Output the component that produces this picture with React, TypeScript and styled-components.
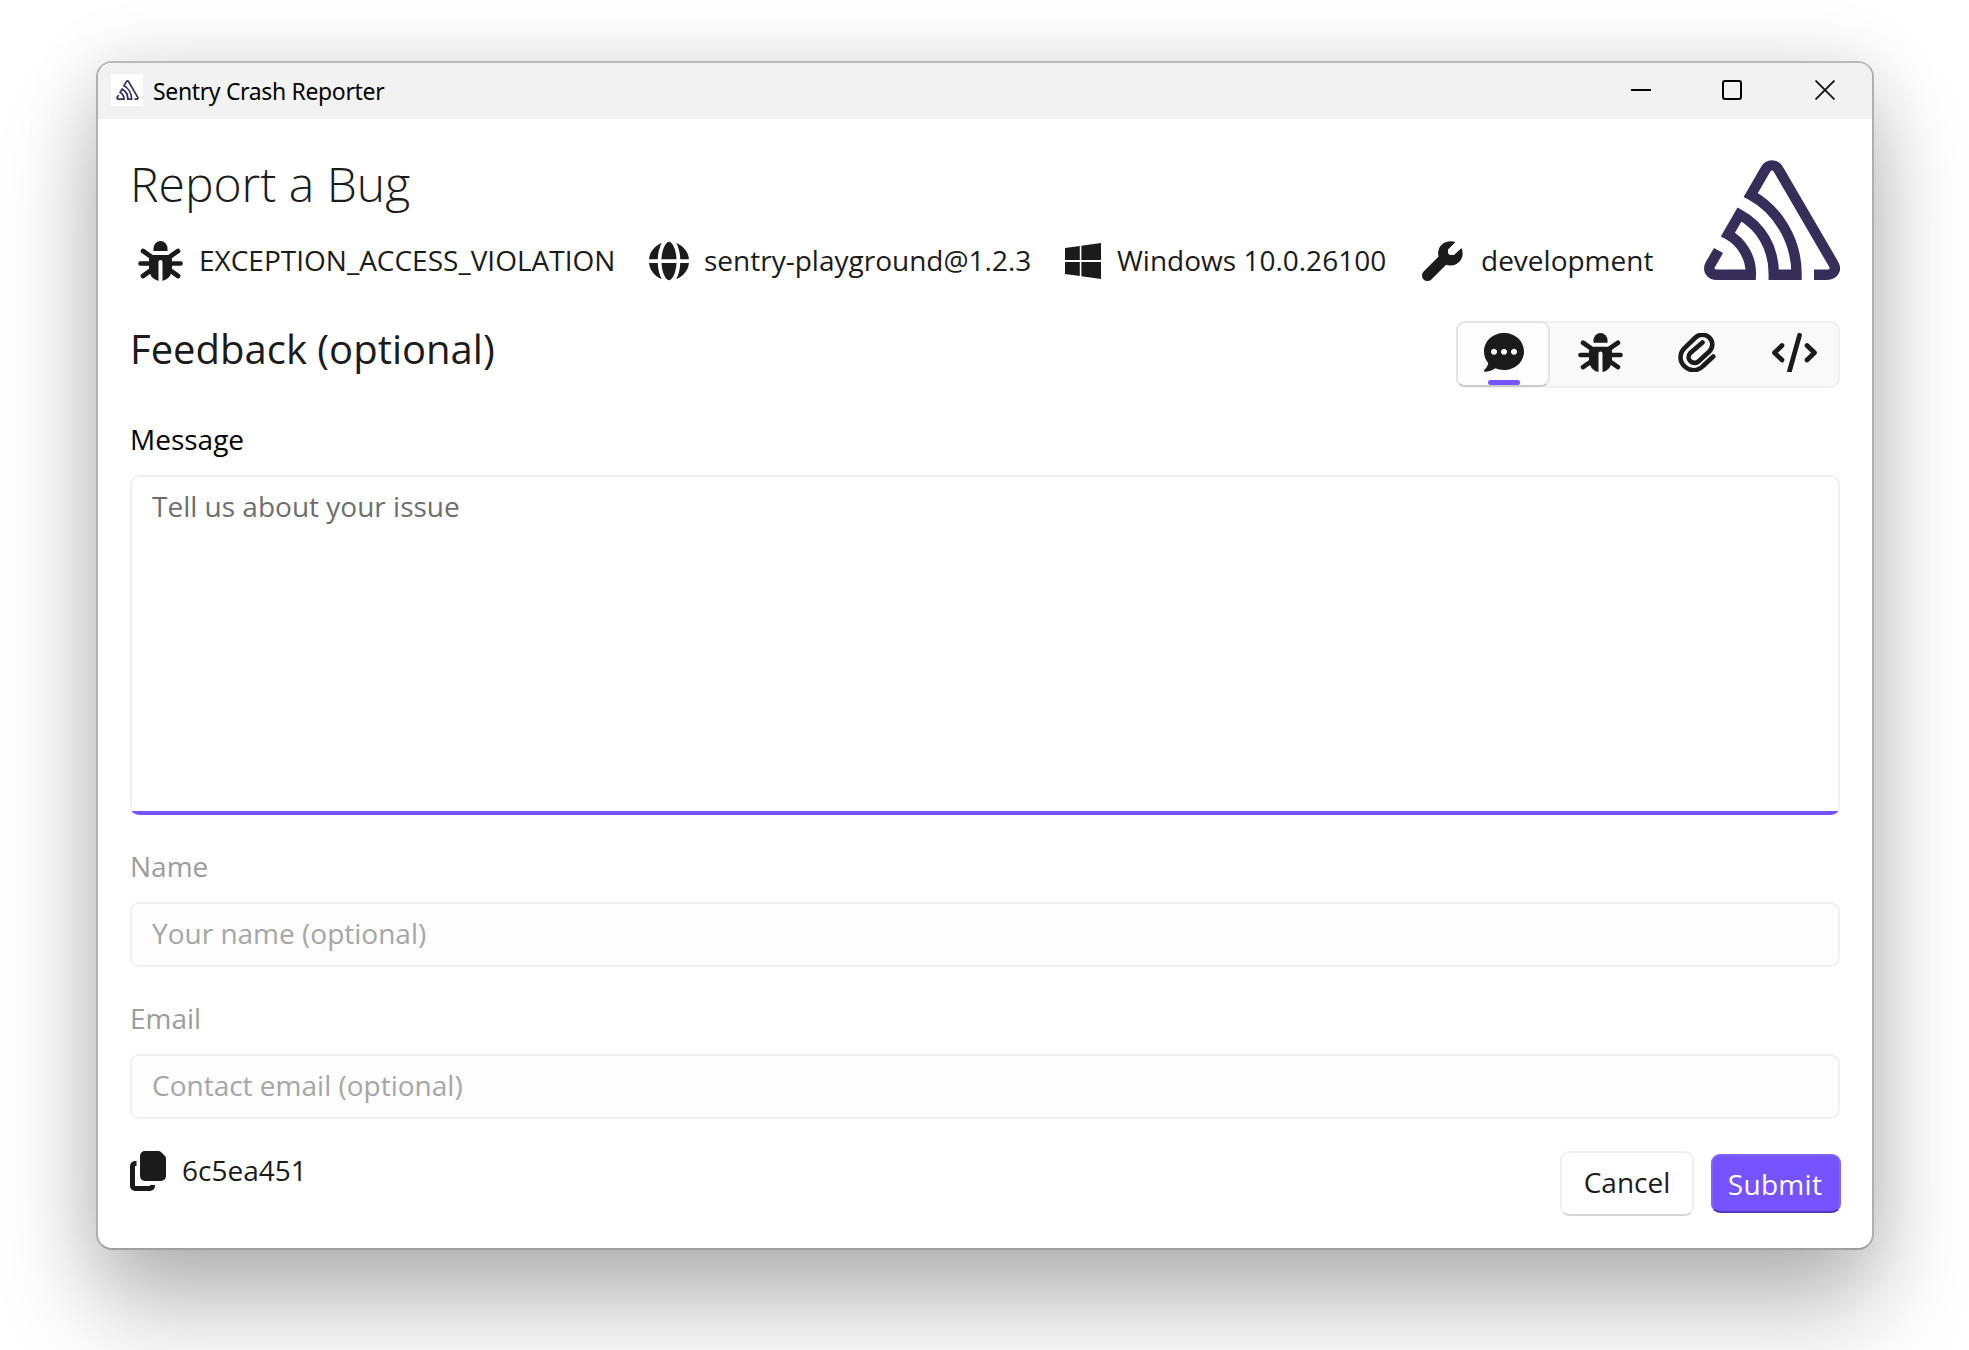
import React from "react";
import styled, { createGlobalStyle, css } from "styled-components";

const ACCENT = "#7553ff";
const INK = "#1b1b1b";

const GlobalStyle = createGlobalStyle`
  *, *::before, *::after { box-sizing: border-box; }
  html, body { margin: 0; height: 100%; background: #fff; overflow: hidden; }
  body { font-family: "Open Sans", "Noto Sans", sans-serif; color: ${INK}; }
`;

const Desktop = styled.main`
  width: 1969px;
  height: 1350px;
  padding: 61px 95px 100px 96px;
  background: #fff;
  overflow: hidden;
`;

const Window = styled.section`
  display: flex;
  flex-direction: column;
  height: 1189px;
  border: 2px solid;
  border-color: #b9b9b9 #afafaf #9f9f9f;
  border-radius: 16px;
  background: #fff;
  box-shadow: 0 60px 96px rgba(0, 0, 0, 0.25), 0 4px 72px rgba(0, 0, 0, 0.13);
`;

const TitleBar = styled.header`
  display: flex;
  align-items: center;
  height: 56px;
  padding: 0 37px 1px 13px;
  background: #f2f2f2;
  border-radius: 14px 14px 0 0;
`;

const AppIcon = styled.div`
  display: grid;
  place-items: center;
  width: 32px;
  height: 32px;
  margin-top: -1px;
  background: #fff;
`;

const WindowTitle = styled.span`
  flex: 1;
  margin-left: 10px;
  color: #000;
  font-family: "Noto Sans", "Open Sans", sans-serif;
  font-size: 23px;
  letter-spacing: -0.35px;
  line-height: 32px;
  white-space: nowrap;
`;

const WindowControls = styled.div`
  display: flex;
  margin-top: -1px;
  > svg:nth-child(2) { margin: 0 73px 0 71px; }
`;

const Content = styled.div`
  display: flex;
  flex-direction: column;
  padding: 33px 32px 0;
`;

const Header = styled.div`
  display: flex;
  justify-content: space-between;
  height: 136px;
`;

const Title = styled.h1`
  margin: -1px 0 0;
  font-size: 48px;
  font-weight: 300;
  line-height: 66px;
  white-space: nowrap;
`;

const Tags = styled.div`
  display: flex;
  align-items: center;
  height: 44px;
  margin-top: 22px;
`;

const Tag = styled.div<{ $width: number; $gap: number; $indent?: number }>`
  display: flex;
  align-items: center;
  gap: ${(p) => p.$gap}px;
  width: ${(p) => p.$width}px;
  padding-left: ${(p) => p.$indent ?? 0}px;
  white-space: nowrap;
  > svg { flex: none; }
`;

const Body = styled.span`
  margin-top: -2px;
  font-size: 28px;
  font-weight: 400;
  line-height: 38px;
  white-space: nowrap;
`;

const Logo = styled.div`
  height: 120px;
  margin-top: 8px;
`;

const SectionBar = styled.div`
  display: flex;
  justify-content: space-between;
  align-items: flex-start;
  height: 67px;
  margin-top: 33px;
`;

const SectionTitle = styled.h2`
  margin: 1px 0 0;
  font-size: 40px;
  font-weight: 400;
  line-height: 54px;
  white-space: nowrap;
`;

const Tabs = styled.nav`
  display: flex;
  width: 384px;
  height: 67px;
  border-radius: 9px;
  background: #f9f9f9;
  box-shadow: inset 0 0 0 2px #f0f0f0;
`;

const Tab = styled.button<{ $active?: boolean; $width: number; $shift?: number }>`
  position: relative;
  flex: none;
  display: flex;
  justify-content: center;
  width: ${(p) => p.$width}px;
  height: 66px;
  padding: 12px 0 0 ${(p) => p.$shift ?? 0}px;
  border: 0;
  border-radius: 9px;
  background: transparent;
  color: ${INK};
  ${(p) =>
    p.$active &&
    css`
      background: #fdfdfd;
      border: 2px solid #e4e4e4;
      border-bottom-color: #cbcbcb;
      padding-top: 10px;
      &::after {
        content: "";
        position: absolute;
        left: 30px;
        bottom: 0;
        width: 32px;
        height: 5px;
        border-radius: 2.5px;
        background: ${ACCENT};
      }
    `}
`;

const Field = styled.div<{ $disabled?: boolean }>`
  display: flex;
  flex-direction: column;
  gap: 17px;
  margin-top: 32px;
  color: ${(p) => (p.$disabled ? "#9c9c9c" : "#000")};
`;

const Label = styled.label`
  font-size: 28px;
  font-weight: 400;
  line-height: 38px;
`;

const inputText = css`
  font-family: inherit;
  font-size: 28px;
  font-weight: 400;
  line-height: 38px;
  outline: none;
  display: block;
  width: 100%;
  border: 2px solid #f0f0f0;
  border-radius: 9px;
`;

const MessageBox = styled.div`
  position: relative;
  height: 340px;
  border-radius: 9px;
  overflow: hidden;
  &::after {
    content: "";
    position: absolute;
    inset: auto 0 0;
    height: 4px;
    background: ${ACCENT};
  }
`;

const TextArea = styled.textarea`
  ${inputText}
  height: 340px;
  padding: 10px 20px;
  resize: none;
  background: #fff;
  &::placeholder { color: #6e6e6e; opacity: 1; }
`;

const Input = styled.input`
  ${inputText}
  height: 65px;
  padding: 0 20px 4px;
  background: #fdfdfd;
  &::placeholder { color: #a6a6a6; opacity: 1; }
`;

const Footer = styled.footer`
  display: flex;
  align-items: flex-start;
  margin-top: 32px;
`;

const EventId = styled.div`
  display: flex;
  align-items: center;
  gap: 16px;
  flex: 1;
  height: 40px;
`;

const Button = styled.button<{ $primary?: boolean }>`
  font-family: inherit;
  font-size: 28px;
  font-weight: 400;
  line-height: 38px;
  padding: 0;
  border-radius: 9px;
  ${(p) =>
    p.$primary
      ? css`
          width: 130px;
          height: 59px;
          margin: 3px -1px 0 17px;
          padding-right: 2px;
          letter-spacing: 0.3px;
          color: #fff;
          background: ${ACCENT};
          border: 2px solid #8062ff;
          border-bottom-color: #5238bd;
        `
      : css`
          width: 134px;
          height: 65px;
          padding-bottom: 4px;
          color: ${INK};
          background: #fff;
          border: 2px solid #f0f0f0;
          border-bottom-color: #d6d6d6;
        `}
`;

const SentryMark = ({ width, height }: { width: number; height: number }) => (
  <svg width={width} height={height} viewBox="0 0 136 120" fill="none" stroke="#362d59" strokeWidth="10.4">
    <path d="M14.5 90.5 L6.8 103.8 C3 110 7 114.8 13 114.8 H46.8 C47.5 97 37 81.500 24 74.500 L35.500 54.500 C57 66 70 88 69.800 114.800 H92.500 C93 80 73 49 46.800 35 L61.500 9.500 C64.500 4 71.500 4 74.500 9.500 L129.500 104 C133 110 129 114.800 123 114.800 H110" />
  </svg>
);

const BugIcon = ({ height = 40 }: { height?: number }) => (
  <svg width="45" height={height} viewBox="0 0 45 40" preserveAspectRatio="none" fill="none">
    <path d="M15.500 10 V7.500 a7 7.500 0 0 1 14 0 V10 Z" fill="currentColor" />
    <path d="M5 10 L15 17 M40 10 L30 17 M2.500 22.500 H14 M42.500 22.500 H31 M5 35 L14 28.500 M40 35 L31 28.500" stroke="currentColor" strokeWidth="4.700" strokeLinecap="round" />
    <path d="M16 14 H29 a5 5 0 0 1 5 5 V28 A11.500 12 0 0 1 24.500 40 V21 a2 2 0 0 0 -4 0 V40 A11.500 12 0 0 1 11 28 V19 a5 5 0 0 1 5 -5 Z" fill="currentColor" />
  </svg>
);

const GlobeIcon = () => (
  <svg width="40" height="40" viewBox="0 0 512 512" fill="currentColor">
    <path d="M352 280H160c2 62 16 119 35 159 11 24 23 41 34 51 11 9 20 13 27 13s16-4 27-13c11-10 23-27 34-51 19-40 33-97 35-159Zm-192-48H352c-2-62-16-119-35-159-11-24-23-41-34-51-11-9-20-13-27-13s-16 4-27 13c-11 10-23 27-34 51-19 40-33 97-35 159Zm-48 0c3-80 20-153 52-206C74 61 8 138 1 232Zm-111 48C8 374 74 451 164 486c-32-53-49-126-52-206Zm399 0c-3 80-20 153-52 206 90-35 156-112 163-206Zm111-48C504 138 438 61 348 26c32 53 49 126 52 206Z" />
  </svg>
);

const WindowsIcon = () => (
  <svg width="36" height="36" viewBox="0 0 448 448" fill="currentColor">
    <path d="M0 62 184 36V213H0ZM0 386 184 412V237H0ZM204 415 448 448V237H204ZM204 33V213H448V0Z" />
  </svg>
);

const WrenchIcon = () => (
  <svg width="41" height="40" viewBox="0 0 41 40" fill="none">
    <path d="M5.500 34.500 L23 17" stroke="currentColor" strokeWidth="11" strokeLinecap="round" />
    <path d="M33.500 1 L26 8.500 V14 H32 L39.500 7 C41 11 41.500 15.500 38 20 C34 25 28 25.500 23.500 23.500 L17 17 C15 12 16.500 6 20.500 3 C24.500 -.200 29 -.500 33.500 1 Z" fill="currentColor" />
  </svg>
);

const CommentIcon = () => (
  <svg width="40" height="39" viewBox="0 0 40 39" fill="currentColor" fillRule="evenodd">
    <path d="M20 0 C31 0 40 8 40 18.500 S31 37 20 37 C17 37 14 36.500 11.500 35.300 C8 37.500 5 38.800 1 38.800 C0 38.800 -.400 37.500 .500 36.700 C2.500 34.700 4 32.500 4.200 30 C1.500 27 0 23 0 18.500 C0 8 9 0 20 0 Z M10 15.700 a3 3 0 1 0 .01 0 Z M20 15.700 a3 3 0 1 0 .01 0 Z M30 15.700 a3 3 0 1 0 .01 0 Z" />
  </svg>
);

const ClipIcon = () => (
  <svg width="38" height="39" viewBox="0 0 38 39" fill="none" stroke="currentColor" strokeWidth="4.600" strokeLinecap="round" strokeLinejoin="round">
    <path d="M35.300 23.500 L25 33 C20 38.500 11.500 38.500 6.700 33.500 C1.200 28.500 1.200 20.500 6.500 15.200 L17.500 4.500 C21.500 .800 27.500 .800 31.300 4.500 C35.300 8.500 35.300 14.500 31.300 18.500 L21 28 C18.500 30.500 14.500 30.500 12.300 28.200 C10 26 10 22.500 12.300 20 L24.500 9.500" />
  </svg>
);

const CodeIcon = () => (
  <svg width="45" height="39" viewBox="0 0 45 39" fill="none" stroke="currentColor" strokeWidth="4.700" strokeLinecap="round" strokeLinejoin="round">
    <path d="M10 12.500 L2.500 19.800 L10 27 M35 12.500 L42.500 19.800 L35 27 M27.500 2.300 L17.500 38" />
  </svg>
);

const CopyIcon = () => (
  <svg width="36" height="40" viewBox="0 0 36 40" fill="none">
    <path d="M15 0 H28 C29.500 0 30.500 .500 31.500 1.500 L34.500 4.500 C35.500 5.500 36 6.500 36 8 V25 a5 5 0 0 1 -5 5 H15 a5 5 0 0 1 -5 -5 V5 a5 5 0 0 1 5 -5 Z" fill="currentColor" />
    <path d="M5 10 H6.500 V15 H5 V35 H20 V34 H25 V35 a5 5 0 0 1 -5 5 H5 a5 5 0 0 1 -5 -5 V15 a5 5 0 0 1 5 -5 Z" fill="currentColor" />
  </svg>
);

export default function App() {
  return (
    <>
      <GlobalStyle />
      <Desktop>
        <Window>
          <TitleBar>
            <AppIcon><SentryMark width={23} height={20} /></AppIcon>
            <WindowTitle>Sentry Crash Reporter</WindowTitle>
            <WindowControls>
              <svg width="20" height="20"><path d="M0 10H20" stroke="#000" strokeWidth="2" /></svg>
              <svg width="20" height="20"><rect x="1" y="1" width="18" height="18" rx="2" fill="none" stroke="#000" strokeWidth="2" /></svg>
              <svg width="20" height="20"><path d="M.5.500 19.500 19.500M19.500.500.500 19.500" stroke="#111" strokeWidth="1.800" /></svg>
            </WindowControls>
          </TitleBar>
          <Content>
            <Header>
              <div>
                <Title>Report a Bug</Title>
                <Tags>
                  <Tag $width={519} $gap={16} $indent={8}><BugIcon /><Body>EXCEPTION_ACCESS_VIOLATION</Body></Tag>
                  <Tag $width={416} $gap={15}><GlobeIcon /><Body>sentry-playground@1.2.3</Body></Tag>
                  <Tag $width={357} $gap={16}><WindowsIcon /><Body>Windows 10.0.26100</Body></Tag>
                  <Tag $width={240} $gap={18}><WrenchIcon /><Body>development</Body></Tag>
                </Tags>
              </div>
              <Logo><SentryMark width={136} height={120} /></Logo>
            </Header>
            <SectionBar>
              <SectionTitle>Feedback (optional)</SectionTitle>
              <Tabs>
                <Tab $active $width={94} $shift={2} aria-label="Feedback"><CommentIcon /></Tab>
                <Tab $width={100} aria-label="Exception"><BugIcon height={39} /></Tab>
                <Tab $width={93} aria-label="Attachments"><ClipIcon /></Tab>
                <Tab $width={97} $shift={6} aria-label="Envelope"><CodeIcon /></Tab>
              </Tabs>
            </SectionBar>
            <Field>
              <Label>Message</Label>
              <MessageBox><TextArea placeholder="Tell us about your issue" /></MessageBox>
            </Field>
            <Field $disabled>
              <Label>Name</Label>
              <Input disabled placeholder="Your name (optional)" />
            </Field>
            <Field $disabled>
              <Label>Email</Label>
              <Input disabled placeholder="Contact email (optional)" />
            </Field>
            <Footer>
              <EventId><CopyIcon /><Body>6c5ea451</Body></EventId>
              <Button>Cancel</Button>
              <Button $primary>Submit</Button>
            </Footer>
          </Content>
        </Window>
      </Desktop>
    </>
  );
}
